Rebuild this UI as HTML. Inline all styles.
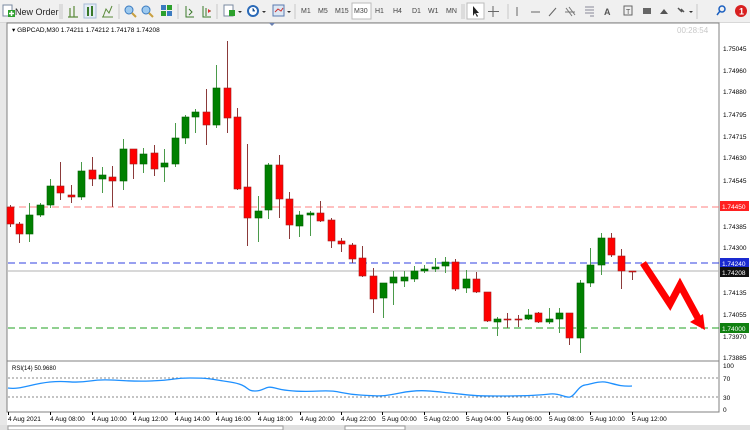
<!DOCTYPE html>
<html><head><meta charset="utf-8"><style>
*{margin:0;padding:0}
body{width:750px;height:430px;overflow:hidden;background:#f0f0f0;font-family:"Liberation Sans",sans-serif;position:relative}
.tb{position:absolute;left:0;top:0;width:750px;height:22px;background:#f0f0f0;border-bottom:1px solid #d8d8d8}
.t{position:absolute;font-size:7px;color:#444;top:8px}
svg text{font-family:"Liberation Sans",sans-serif}
</style></head><body>
<div class="tb">
<svg width="750" height="22" style="position:absolute;left:0;top:0">
<rect x="3" y="5" width="9" height="11" fill="#fff" stroke="#7a8aa0"/><rect x="8" y="10" width="7" height="7" fill="#2ca02c"/><path d="M11.5 11v5M9 13.5h5" stroke="#fff" stroke-width="1.5"/>
<text x="15" y="15" font-size="9" fill="#222">New Order</text>
<path d="M60 4v15M62 4v15" stroke="#c8c8c8"/>
<path d="M70 8v9M74 6v11M68 17h10" stroke="#5a8a3a" stroke-width="1.2" fill="none"/>
<rect x="84" y="4" width="12" height="14" fill="#e4ecf6" stroke="#a9bcd6"/><path d="M88 7v9M92 6v10" stroke="#3a7a2a" stroke-width="2"/>
<path d="M103 17l3-8 3 4 3-7M102 17h11" stroke="#5a8a3a" fill="none"/>
<path d="M119 4v15" stroke="#c8c8c8"/>
<circle cx="129" cy="10" r="4" fill="#9cc9ef" stroke="#3b7bc0"/><path d="M132 13l4 4" stroke="#c8a040" stroke-width="2"/>
<circle cx="146" cy="10" r="4" fill="#9cc9ef" stroke="#3b7bc0"/><path d="M149 13l4 4" stroke="#c8a040" stroke-width="2"/>
<rect x="161" y="5" width="5" height="5" fill="#3b7bc0"/><rect x="167" y="5" width="5" height="5" fill="#2ca02c"/><rect x="161" y="11" width="5" height="5" fill="#2ca02c"/><rect x="167" y="11" width="5" height="5" fill="#3b7bc0"/>
<path d="M178 4v15" stroke="#c8c8c8"/>
<path d="M186 6v11h8M189 9l3 3-3 3" stroke="#3a7a2a" fill="none"/>
<path d="M203 6v11h8M206 8v8M208 11h3" stroke="#3a7a2a" fill="none"/><path d="M208 9l3 2-3 2" fill="#d33"/>
<path d="M217 4v15" stroke="#c8c8c8"/>
<rect x="224" y="5" width="9" height="11" fill="#fff" stroke="#7a8aa0"/><rect x="229" y="10" width="6" height="6" fill="#2ca02c"/><path d="M238 11l2 2 2-2z" fill="#333"/>
<circle cx="253" cy="11" r="5" fill="#fff" stroke="#2a6ab8" stroke-width="2"/><path d="M253 8v3h2" stroke="#2a6ab8"/><path d="M262 11l2 2 2-2z" fill="#333"/>
<rect x="273" y="5" width="11" height="11" fill="#dde8f4" stroke="#5a7ab0"/><path d="M275 12l3-3 3 2 2-3" stroke="#c33" fill="none"/><path d="M287 11l2 2 2-2z" fill="#333"/>
<path d="M295 4v15" stroke="#c8c8c8"/>
<rect x="352" y="3" width="19" height="16" fill="#fff" stroke="#bbb"/>
<path d="M462 4v15M464 4v15" stroke="#c8c8c8"/>
<rect x="467" y="3" width="17" height="16" fill="#fff" stroke="#bbb"/><path d="M473 6v10l2-3 2 4 1-1-2-3h3z" fill="#222"/>
<path d="M493 6v11M488 11.5h11" stroke="#666"/>
<path d="M508 4v15" stroke="#c8c8c8"/>
<path d="M517 7v9" stroke="#666"/><path d="M531 12h9" stroke="#666"/><path d="M549 16l7-8" stroke="#666"/>
<path d="M566 8l6 8M569 7l6 8M565 12h10" stroke="#777"/><path d="M585 7h9M585 10h9M585 13h9M590 16h4" stroke="#889"/>
<text x="604" y="15" font-size="9" fill="#555" font-weight="bold">A</text>
<rect x="624" y="6" width="8" height="9" fill="none" stroke="#666"/><text x="626" y="14" font-size="7" fill="#555">T</text>
<rect x="643" y="8" width="8" height="6" fill="#666"/><path d="M660 14l4-5 4 5z" fill="#555"/>
<path d="M678 8l4 4M681 9l3 3" stroke="#555" stroke-width="1.5"/><path d="M689 11l2 2 2-2z" fill="#333"/>
<path d="M697 4v15" stroke="#c8c8c8"/>
<circle cx="722" cy="9" r="3" fill="none" stroke="#1a5fc0" stroke-width="1.5"/><path d="M720 11l-3 4" stroke="#1a5fc0" stroke-width="1.5"/>
<circle cx="741" cy="11" r="6" fill="#d82020"/><text x="739" y="14.5" font-size="9" fill="#fff" font-weight="bold">1</text>
</svg>
<span class="t" style="left:301px">M1</span><span class="t" style="left:318px">M5</span><span class="t" style="left:335px">M15</span><span class="t" style="left:354px">M30</span><span class="t" style="left:375px">H1</span><span class="t" style="left:393px">H4</span><span class="t" style="left:412px">D1</span><span class="t" style="left:428px">W1</span><span class="t" style="left:446px">MN</span>
</div>
<svg width="750" height="430" style="position:absolute;left:0;top:0" id="ch">
<rect x="0" y="23" width="7" height="402" fill="#e8e8e8"/>
<rect x="7" y="23" width="743" height="402" fill="#fff"/>
<rect x="7" y="23" width="712" height="338" fill="#fff" stroke="#808080"/>
<rect x="7" y="361" width="712" height="51" fill="#fff" stroke="#808080"/>
<path d="M8 378h711M8 397h711" stroke="#888" stroke-dasharray="2,2"/>
<text x="12" y="32" font-size="6.5" fill="#000">▾ GBPCAD,M30  1.74211 1.74212 1.74178 1.74208</text>
<text x="677" y="33" font-size="8" fill="#c8c8c8">00:28:54</text>
<path d="M269 23l3 3 3-3z" fill="#6a80b0"/>
<text x="12" y="370" font-size="6" fill="#000">RSI(14) 50.9680</text>
<path d="M8 207h711" stroke="#ff8080" stroke-dasharray="7,4"/>
<path d="M8 263h711" stroke="#3040e0" stroke-dasharray="7,4"/>
<path d="M8 271h711" stroke="#b0b0b0"/>
<path d="M8 328h711" stroke="#20a020" stroke-dasharray="7,4"/>
<g id="c"></g>
<path d="M643 263L670 304L680 285L699 320" stroke="#ff0000" stroke-width="7" fill="none"/>
<path d="M690 322L705 330L703 314z" fill="#ff0000"/>
<path d="M8 388C20 390 30 384 50 382S70 384 90 381S120 382 150 381S170 378 190 378S210 379 230 382S245 391 255 391S265 385 275 388S300 392 320 391S340 394 360 395S380 397 400 393S430 391 450 393S470 396 500 396S540 395 550 394S565 398 570 397S578 386 585 385S598 381 605 382S620 387 632 386" stroke="#1e90ff" stroke-width="1.3" fill="none"/>
<g font-size="6.5" fill="#000">
<text x="723" y="51">1.75045</text><text x="723" y="73">1.74960</text><text x="723" y="94">1.74880</text><text x="723" y="117">1.74795</text><text x="723" y="139">1.74715</text><text x="723" y="160">1.74630</text><text x="723" y="183">1.74545</text><text x="723" y="229">1.74385</text><text x="723" y="250">1.74300</text><text x="723" y="295">1.74135</text><text x="723" y="317">1.74055</text><text x="723" y="339">1.73970</text><text x="723" y="360">1.73885</text>
<text x="723" y="368">100</text><text x="723" y="381">70</text><text x="723" y="400">30</text><text x="723" y="412">0</text>
</g>
<rect x="720" y="201" width="29" height="10" fill="#ff2020"/><text x="722" y="209" font-size="6.5" fill="#fff">1.74450</text>
<rect x="720" y="258" width="29" height="10" fill="#1a2ad0"/><text x="722" y="266" font-size="6.5" fill="#fff">1.74240</text>
<rect x="720" y="267" width="29" height="10" fill="#111"/><text x="722" y="275" font-size="6.5" fill="#fff">1.74208</text>
<rect x="720" y="323" width="29" height="10" fill="#108010"/><text x="722" y="331" font-size="6.5" fill="#fff">1.74000</text>
<g font-size="6.5" fill="#000" id="tl"></g>
<rect x="0" y="425" width="750" height="5" fill="#e0e0e0"/><rect x="8" y="426" width="275" height="4" fill="#fff" stroke="#999"/><rect x="345" y="426" width="60" height="4" fill="#fff" stroke="#999"/>
</svg>
<script>
var C=[[10,207,224,205,227,0],[19,224,234,222,243,0],[29,215,234,203,242,1],[40,205,215,203,217,1],[50,186,205,179,208,1],[60,186,193,162,200,0],[71,195,197,185,203,0],[81,171,197,162,200,1],[92,170,179,157,186,0],[102,175,179,167,193,1],[112,177,181,166,207,0],[123,149,181,139,190,1],[133,149,164,149,179,0],[143,154,164,148,173,1],[154,153,169,145,176,0],[164,163,167,149,182,1],[175,138,164,123,167,1],[185,117,138,115,144,1],[195,112,117,109,133,1],[206,112,125,89,145,0],[216,88,125,65,128,1],[227,88,118,41,133,0],[237,117,189,108,190,0],[247,187,218,144,246,0],[258,211,218,196,242,1],[268,165,210,163,219,1],[279,165,199,155,218,0],[289,199,225,192,239,0],[299,215,226,211,237,1],[310,213,215,211,236,1],[320,213,221,201,222,0],[331,220,241,218,248,0],[341,241,244,238,252,0],[352,245,259,243,263,0],[362,258,276,246,277,0],[373,276,299,268,313,0],[383,283,298,283,318,1],[393,277,283,271,305,1],[404,277,281,271,287,1],[414,271,279,266,282,1],[424,269,271,265,273,1],[435,267,269,258,272,1],[445,262,266,257,273,1],[455,262,289,259,291,0],[466,279,288,270,293,1],[476,279,292,272,293,0],[487,292,321,292,322,0],[497,319,322,317,336,1],[507,319,320,313,328,0],[518,319,320,315,327,0],[528,315,319,309,320,1],[538,313,322,312,323,0],[549,319,322,308,324,1],[559,313,319,308,333,1],[569,313,338,313,345,0],[580,283,338,280,353,1],[590,265,283,248,287,1],[601,238,265,233,275,1],[611,238,255,233,257,0],[621,256,271,249,289,0],[632,271,272,271,280,0]];
var s='';C.forEach(function(c){var g=c[5];s+='<path d="M'+(c[0]+.5)+' '+c[3]+'V'+c[4]+'" stroke="'+(g?'#4a9a4a':'#8b3a3a')+'"/>';s+='<rect x="'+(c[0]-3)+'" y="'+c[1]+'" width="7" height="'+Math.max(1,c[2]-c[1])+'" fill="'+(g?'#008000':'#ff0000')+'" stroke="'+(g?'#006000':'#a02020')+'" stroke-width=".6"/>';});
document.getElementById('c').innerHTML=s;
var T=[[8,'4 Aug 2021'],[50,'4 Aug 08:00'],[92,'4 Aug 10:00'],[133,'4 Aug 12:00'],[175,'4 Aug 14:00'],[216,'4 Aug 16:00'],[258,'4 Aug 18:00'],[300,'4 Aug 20:00'],[341,'4 Aug 22:00'],[382,'5 Aug 00:00'],[424,'5 Aug 02:00'],[466,'5 Aug 04:00'],[507,'5 Aug 06:00'],[549,'5 Aug 08:00'],[590,'5 Aug 10:00'],[632,'5 Aug 12:00']];
var t='';T.forEach(function(a){t+='<path d="M'+(a[0]+.5)+' 412v3" stroke="#000"/><text x="'+a[0]+'" y="421">'+a[1]+'</text>';});
document.getElementById('tl').innerHTML=t;
</script>
</body></html>
